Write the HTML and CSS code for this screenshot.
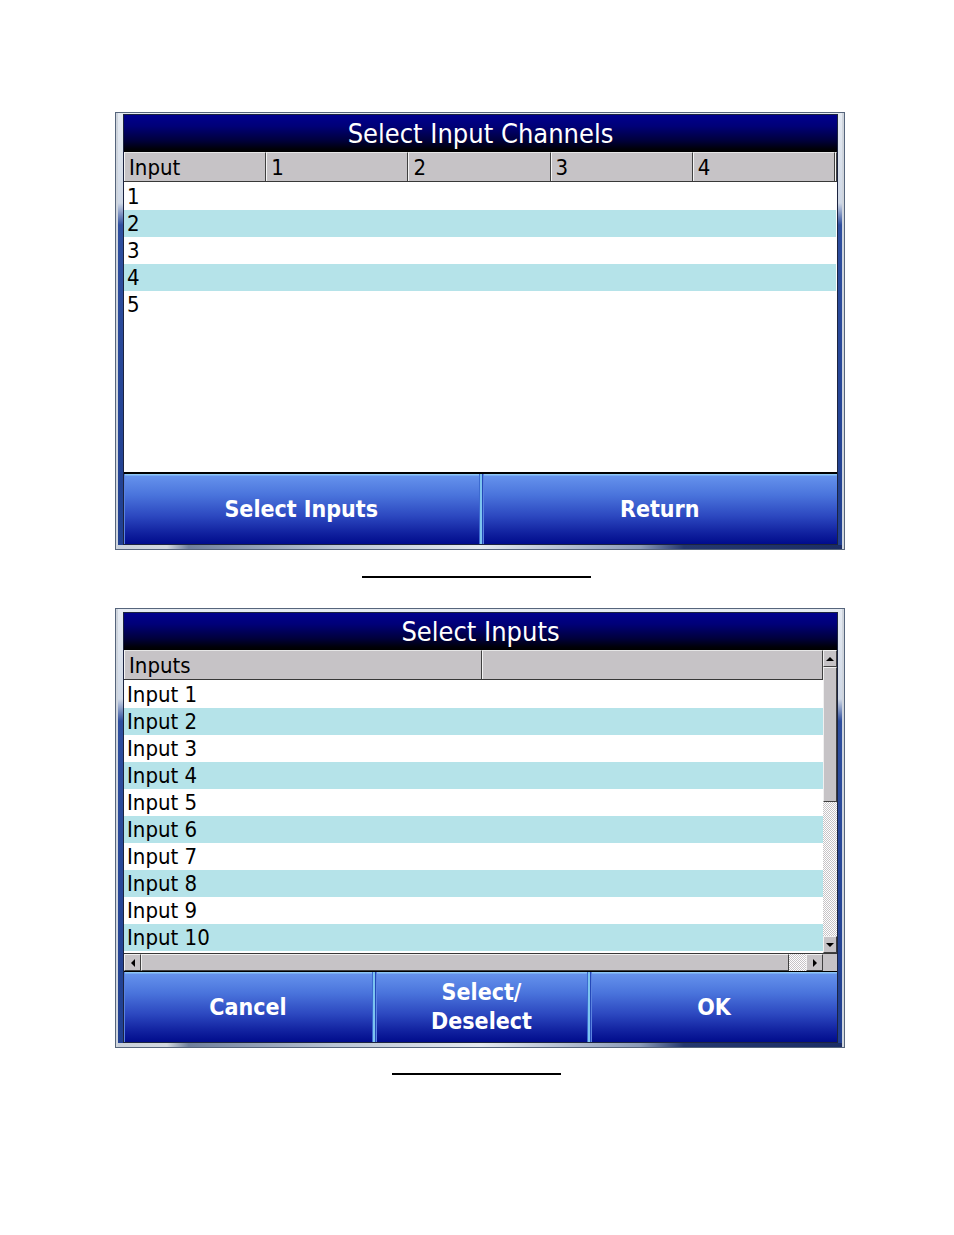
FILE: index.html
```html
<!DOCTYPE html>
<html>
<head>
<meta charset="utf-8">
<link rel="stylesheet" href="styles.css">
</head>
<body>
<div class="page">
  <div class="win win1">
    <div class="inner">
      <div class="title">Select Input Channels</div>
      <div class="hdr">
        <div class="hc c5">Input</div>
        <div class="hc c5">1</div>
        <div class="hc c5">2</div>
        <div class="hc c5">3</div>
        <div class="hc c5">4</div>
        <div class="hc rest"></div>
      </div>
      <div class="list list1">
        <div class="row">1</div>
        <div class="row alt">2</div>
        <div class="row">3</div>
        <div class="row alt">4</div>
        <div class="row">5</div>
      </div>
      <div class="btns btns1">
        <div class="btn b-half">Select Inputs</div>
        <div class="sep"></div>
        <div class="btn b-half">Return</div>
      </div>
    </div>
  </div>
  <div class="rule rule1"></div>

  <div class="win win2">
    <div class="inner">
      <div class="title">Select Inputs</div>
      <div class="grid2">
        <div class="pane">
          <div class="hdr">
            <div class="hc c-half">Inputs</div>
            <div class="hc c-half2"></div>
          </div>
          <div class="list list2">
            <div class="row">Input 1</div>
            <div class="row alt">Input 2</div>
            <div class="row">Input 3</div>
            <div class="row alt">Input 4</div>
            <div class="row">Input 5</div>
            <div class="row alt">Input 6</div>
            <div class="row">Input 7</div>
            <div class="row alt">Input 8</div>
            <div class="row">Input 9</div>
            <div class="row alt">Input 10</div>
          </div>
        </div>
        <div class="vscroll">
          <div class="sbtn vbtn"><span class="tri up"></span></div>
          <div class="thumb vthumb"></div>
          <div class="track"></div>
          <div class="sbtn vbtn"><span class="tri down"></span></div>
        </div>
        <div class="hscroll">
          <div class="sbtn hbtn"><span class="tri left"></span></div>
          <div class="thumb hthumb"></div>
          <div class="track htrack"></div>
          <div class="sbtn hbtn"><span class="tri right"></span></div>
        </div>
        <div class="corner"></div>
      </div>
      <div class="btns btns2">
        <div class="btn b-cancel">Cancel</div>
        <div class="sep"></div>
        <div class="btn b-sel">Select/<br>Deselect</div>
        <div class="sep"></div>
        <div class="btn b-ok">OK</div>
      </div>
    </div>
  </div>
  <div class="rule rule2"></div>
</div>
</body>
</html>
```

FILE: styles.css
```css
html, body {
  margin: 0;
  padding: 0;
  background: #ffffff;
}

.page {
  padding-top: 112px;
  width: 954px;
  height: 1123px;
  font-family: "DejaVu Sans Condensed", "DejaVu Sans", sans-serif;
  font-stretch: condensed;
}

.win {
  margin-left: 115px;
  width: 730px;
  box-sizing: border-box;
  border: 1px solid #56657c;
  padding: 1px 6px 4px 7px;
  background:
    linear-gradient(to right, #c9d0da 0, #d2d8e0 7%, #6f7f9c 10%, #b9c4d4 30%, #e4e9f0 50%, #8a9ab8 72%, #24376f 78%, #1b2d66 100%) left bottom / 100% 4px no-repeat,
    linear-gradient(to bottom, #e6ebf2 0, #cfd8e6 90px, #2e4e9e 112px, #203f90 100%);
  box-shadow: inset 2px 0 0 #cfd5dd, inset -2px 0 0 #cfd5dd;
}

.win1 { height: 438px; }
.win2 { height: 440px; padding-top: 3px; }

.inner {
  height: 100%;
  box-sizing: border-box;
  border: 1px solid #1c2440;
  background: #ffffff;
  display: flex;
  flex-direction: column;
}

.title {
  height: 37px;
  flex: none;
  background: linear-gradient(to bottom, #00008e 0%, #000078 30%, #00003a 70%, #000008 92%, #000000 100%);
  color: #ffffff;
  font-size: 27px;
  line-height: 38px;
  text-align: center;
}

.hdr {
  height: 30px;
  flex: none;
  display: flex;
  box-sizing: border-box;
  border-bottom: 1px solid #383838;
  background: #c6c3c6;
}

.hc {
  box-sizing: border-box;
  height: 29px;
  border-top: 1px solid #e6e6e6;
  border-left: 1px solid #f4f4f4;
  border-right: 1px solid #404040;
  padding-left: 4px;
  font-size: 22px;
  line-height: 30px;
  color: #000000;
  background: #c6c3c6;
}

.c5 { width: 143px; }
.rest { flex: 1; padding: 0; }
.c-half { width: 358px; }
.c-half2 { flex: 1; }

.list1 {
  flex: 1;
  padding-top: 1px;
}

.row {
  height: 27px;
  font-size: 22px;
  line-height: 28px;
  padding-left: 3px;
  color: #000000;
}

.row.alt { background: #b5e3e9; }

.list1 .row { margin-right: 1px; }

.btns {
  display: flex;
  border-top: 2px solid #000000;
}

.btns1 {
  flex: none;
  height: 70px;
}

.btns2 {
  flex: 1;
  border-top: 1px solid #000000;
}

.btn {
  display: flex;
  align-items: center;
  justify-content: center;
  text-align: center;
  color: #ffffff;
  font-weight: bold;
  font-size: 23px;
  line-height: 29px;
  background: linear-gradient(to bottom, #8cc6f6 0, #8cc6f6 1px, #6592ec 2px, #4a74dc 30%, #2c48c0 60%, #10209e 85%, #000c8c 100%);
  box-shadow: inset 1px 0 0 #5a82e0;
}

.b-half { flex: 1; }
.b-cancel { width: 248px; flex: none; }
.b-sel { flex: 1; }
.b-ok { width: 246px; flex: none; }

.sep {
  width: 4px;
  flex: none;
  background: linear-gradient(to right, #3c6ad0 0, #3c6ad0 1px, #7cc4f0 1px, #7cc4f0 3px, #2448b8 3px);
}

.grid2 {
  flex: none;
  display: grid;
  grid-template-columns: 699px 1fr;
  grid-template-rows: 303px 18px;
}

.pane {
  display: flex;
  flex-direction: column;
  overflow: hidden;
}

.list2 { padding-top: 1px; }

.vscroll {
  display: flex;
  flex-direction: column;
  background: #c6c3c6;
}

.sbtn {
  box-sizing: border-box;
  background: #c6c3c6;
  border-top: 1px solid #f0f0f0;
  border-left: 1px solid #f0f0f0;
  border-right: 1px solid #404040;
  border-bottom: 1px solid #404040;
  display: flex;
  align-items: center;
  justify-content: center;
}

.vbtn { height: 17px; }
.hbtn { width: 17px; height: 17px; }

.thumb {
  box-sizing: border-box;
  background: #c6c3c6;
  border-top: 1px solid #f0f0f0;
  border-left: 1px solid #f0f0f0;
  border-right: 1px solid #404040;
  border-bottom: 1px solid #404040;
}

.vthumb { height: 135px; }

.track {
  flex: 1;
  background: repeating-conic-gradient(#c6c3c6 0 25%, #ffffff 0 50%) 0 0 / 2px 2px;
}

.hscroll {
  display: flex;
  background: #c6c3c6;
  border-top: 1px solid #383838;
  box-sizing: border-box;
}

.hthumb { width: 648px; height: 17px; }
.htrack { height: 17px; }

.corner {
  background: #c6c3c6;
  border-top: 1px solid #383838;
}

.tri {
  width: 0;
  height: 0;
  display: block;
}

.tri.up {
  border-left: 4px solid transparent;
  border-right: 4px solid transparent;
  border-bottom: 4px solid #000000;
}

.tri.down {
  border-left: 4px solid transparent;
  border-right: 4px solid transparent;
  border-top: 4px solid #000000;
}

.tri.left {
  border-top: 4px solid transparent;
  border-bottom: 4px solid transparent;
  border-right: 4px solid #000000;
}

.tri.right {
  border-top: 4px solid transparent;
  border-bottom: 4px solid transparent;
  border-left: 4px solid #000000;
}

.rule {
  height: 2px;
  background: #000000;
}

.rule1 {
  margin-top: 26px;
  margin-left: 362px;
  width: 229px;
  margin-bottom: 30px;
}

.rule2 {
  margin-top: 25px;
  margin-left: 392px;
  width: 169px;
}
```
